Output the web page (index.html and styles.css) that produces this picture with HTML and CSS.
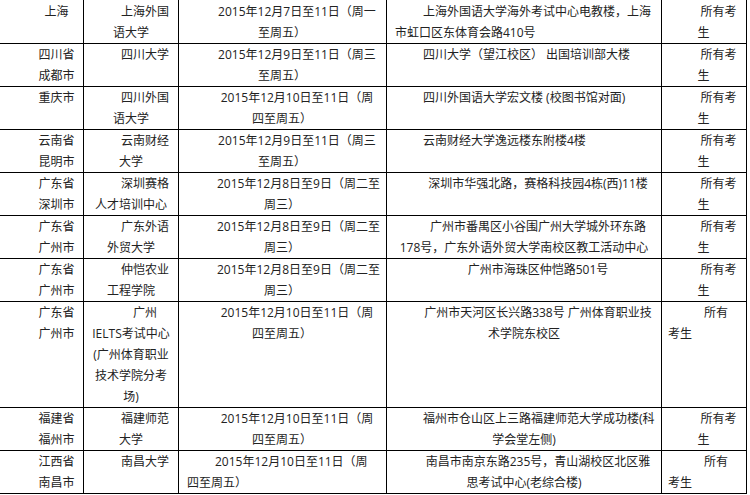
FILE: index.html
```html
<!DOCTYPE html>
<html lang="zh-CN">
<head>
<meta charset="utf-8">
<title>雅思考点</title>
<link rel="stylesheet" href="styles.css">
</head>
<body>
<table class="venues">
  <tbody>
    <tr>
      <td class="c-city">上海</td>
      <td class="c-org">上海外国<br>语大学</td>
      <td class="c-date">2015年12月7日至11日（周一<br>至周五）</td>
      <td class="c-addr left">上海外国语大学海外考试中心电教楼，上海<br>市虹口区东体育会路410号</td>
      <td class="c-who">所有考<br>生</td>
    </tr>
    <tr>
      <td class="c-city">四川省<br>成都市</td>
      <td class="c-org">四川大学</td>
      <td class="c-date">2015年12月9日至11日（周三<br>至周五）</td>
      <td class="c-addr left">四川大学（望江校区） 出国培训部大楼</td>
      <td class="c-who">所有考<br>生</td>
    </tr>
    <tr>
      <td class="c-city">重庆市</td>
      <td class="c-org">四川外国<br>语大学</td>
      <td class="c-date">2015年12月10日至11日（周<br>四至周五）</td>
      <td class="c-addr left">四川外国语大学宏文楼 (校图书馆对面)</td>
      <td class="c-who">所有考<br>生</td>
    </tr>
    <tr>
      <td class="c-city">云南省<br>昆明市</td>
      <td class="c-org">云南财经<br>大学</td>
      <td class="c-date">2015年12月9日至11日（周三<br>至周五）</td>
      <td class="c-addr left">云南财经大学逸远楼东附楼4楼</td>
      <td class="c-who">所有考<br>生</td>
    </tr>
    <tr>
      <td class="c-city">广东省<br>深圳市</td>
      <td class="c-org">深圳赛格<br>人才培训中心</td>
      <td class="c-date">2015年12月8日至9日（周二至<br>周三）</td>
      <td class="c-addr">深圳市华强北路，赛格科技园4栋(西)11楼</td>
      <td class="c-who">所有考<br>生</td>
    </tr>
    <tr>
      <td class="c-city">广东省<br>广州市</td>
      <td class="c-org">广东外语<br>外贸大学</td>
      <td class="c-date">2015年12月8日至9日（周二至<br>周三）</td>
      <td class="c-addr">广州市番禺区小谷围广州大学城外环东路<br>178号，广东外语外贸大学南校区教工活动中心</td>
      <td class="c-who">所有考<br>生</td>
    </tr>
    <tr>
      <td class="c-city">广东省<br>广州市</td>
      <td class="c-org">仲恺农业<br>工程学院</td>
      <td class="c-date">2015年12月8日至9日（周二至<br>周三）</td>
      <td class="c-addr">广州市海珠区仲恺路501号</td>
      <td class="c-who">所有考<br>生</td>
    </tr>
    <tr>
      <td class="c-city">广东省<br>广州市</td>
      <td class="c-org">广州<br>IELTS考试中心<br>(广州体育职业<br>技术学院分考<br>场)</td>
      <td class="c-date">2015年12月10日至11日（周<br>四至周五）</td>
      <td class="c-addr">广州市天河区长兴路338号 广州体育职业技<br>术学院东校区</td>
      <td class="c-who left">所有<br>考生</td>
    </tr>
    <tr>
      <td class="c-city">福建省<br>福州市</td>
      <td class="c-org">福建师范<br>大学</td>
      <td class="c-date">2015年12月10日至11日（周<br>四至周五）</td>
      <td class="c-addr">福州市仓山区上三路福建师范大学成功楼(科<br>学会堂左侧)</td>
      <td class="c-who">所有考<br>生</td>
    </tr>
    <tr>
      <td class="c-city">江西省<br>南昌市</td>
      <td class="c-org">南昌大学</td>
      <td class="c-date left">2015年12月10日至11日（周<br>四至周五）</td>
      <td class="c-addr">南昌市南京东路235号，青山湖校区北区雅<br>思考试中心(老综合楼)</td>
      <td class="c-who left">所有<br>考生</td>
    </tr>
  </tbody>
</table>
</body>
</html>
```
FILE: styles.css
```css
html, body {
  margin: 0;
  padding: 0;
  background: #fff;
}

body {
  color: #222;
  font-family: "Open Sans", "Noto Sans CJK SC", sans-serif;
  font-size: 12px;
  line-height: 21px;
}

.venues {
  border-collapse: separate;
  border-spacing: 0;
  table-layout: fixed;
  width: 747px;
}

.venues td {
  box-sizing: border-box;
  padding: 0;
  border-right: 1px solid #000;
  border-bottom: 1px solid #000;
  vertical-align: top;
  text-align: center;
  white-space: nowrap;
  text-indent: 28px;
}

.venues tr:first-child td {
  padding-top: 1px;
}

.venues .c-city {
  width: 84px;
  padding-left: 30px;
  padding-right: 0;
  text-indent: 0;
}

.venues .c-org {
  width: 95px;
  padding-left: 8px;
  padding-right: 8px;
}

.venues .c-date {
  width: 208px;
  padding-left: 8px;
  padding-right: 9px;
  text-indent: 30px;
}

.venues .c-addr {
  width: 275px;
  padding-left: 8px;
  padding-right: 8px;
}

.venues .c-who {
  width: 85px;
  padding-left: 6px;
  padding-right: 7px;
  text-indent: 30px;
}

.venues .left {
  text-align: left;
}

.venues .c-date.left {
  text-indent: 28px;
}

.venues .c-who.left {
  text-indent: 36px;
}
```
